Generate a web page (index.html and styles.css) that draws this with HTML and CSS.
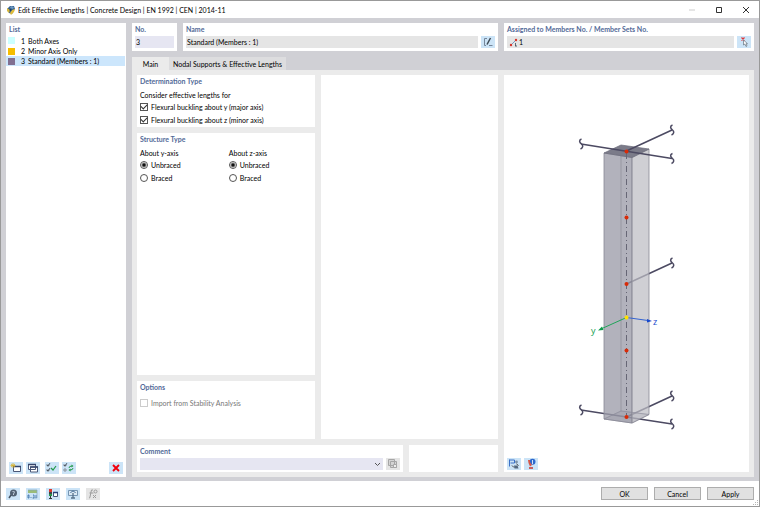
FILE: index.html
```html
<!DOCTYPE html>
<html lang="en">
<head>
<meta charset="utf-8">
<title>Edit Effective Lengths</title>
<link rel="stylesheet" href="styles.css">
</head>
<body>
<div class="window">
  <header class="titlebar">
    <svg class="app-icon" viewBox="0 0 10 10"><path d="M1 4 4 1l4 0 1 3-3 5-3-1z" fill="#35618f"/><path d="M1 3 4 5 3 8 1 6z" fill="#d8b83c"/><path d="M5 1l3 1-1 2-3-1z" fill="#6f9ac2"/><path d="M6 5l3-1-1 3-3 3-1-2z" fill="#e0bc3a"/><circle cx="4.500" cy="5" r="1" fill="#1e3c60"/></svg>
    <h1 class="title">Edit Effective Lengths | Concrete Design | EN 1992 | CEN | 2014-11</h1>
    <div class="window-controls">
      <button class="win-btn" aria-label="Minimize" disabled><svg viewBox="0 0 8 8"><path d="M1 4h6" stroke="#ccc"/></svg></button>
      <button class="win-btn" aria-label="Maximize"><svg viewBox="0 0 8 8"><path d="M1.500 1.500h5v5h-5z" fill="none" stroke="#333"/></svg></button>
      <button class="win-btn" aria-label="Close"><svg viewBox="0 0 8 8"><path d="M1 1l6 6M7 1l-6 6" stroke="#333"/></svg></button>
    </div>
  </header>

  <main class="workspace">
    <aside class="card list-card">
      <h2 class="heading">List</h2>
      <ul class="list">
        <li class="row"><span class="swatch cyan"></span><span class="num">1</span><span>Both Axes</span></li>
        <li class="row"><span class="swatch yellow"></span><span class="num">2</span><span>Minor Axis Only</span></li>
        <li class="row selected"><span class="swatch purple"></span><span class="num">3</span><span>Standard (Members : 1)</span></li>
      </ul>
      <div class="list-tools">
        <button class="tool" aria-label="New"><svg viewBox="0 0 14 12"><path d="M4.500 4.500h7v5h-7z" fill="#fff" stroke="#4b5878"/><path d="M4 4.500h8" stroke="#34456c" stroke-width="1.500"/><path d="M4 1v5M1.500 3.500h5M2 2l4 3M6 2 2 5" stroke="#d9b22c" stroke-width=".8"/></svg></button>
        <button class="tool" aria-label="Copy"><svg viewBox="0 0 14 12"><path d="M2.500 2.500h7v5h-7zM4.500 5h7v5h-7z" fill="#fff" stroke="#4b5878"/><path d="M2 2.500h8M4 5h8" stroke="#34456c" stroke-width="1.500"/></svg></button>
        <button class="tool spaced" aria-label="Select all"><svg viewBox="0 0 14 12" fill="none"><path d="M2 2v2h2V2M2 7v2h2V7" stroke="#8a929c"/><path d="M2 3l1 1 2-3M2 8l1 1 2-3" stroke="#3d4a55" stroke-width=".8"/><path d="M6 6l2 2 3-4" stroke="#23994b" stroke-width="1.200"/></svg></button>
        <button class="tool" aria-label="Invert selection"><svg viewBox="0 0 14 12" fill="none"><path d="M2 2v2h2V2M2 7h2v2H2z" stroke="#8a929c"/><path d="M2 3l1 1 2-3" stroke="#3d4a55" stroke-width=".8"/><path d="M7 6q0-2 3-2M11 6q0 2-3 2" stroke="#23994b"/><path d="M9.500 2.500l2 1.500-2 1.500zM8.500 6.500l-2 1.500 2 1.500z" fill="#23994b"/></svg></button>
        <button class="tool delete" aria-label="Delete"><svg viewBox="0 0 14 12"><path d="M4 3l6 6M10 3l-6 6" stroke="#f0000c" stroke-width="1.900"/></svg></button>
      </div>
    </aside>

    <section class="editor">
      <div class="fields">
        <div class="card field">
          <label class="heading" for="no">No.</label>
          <input class="input lilac" id="no" value="3">
        </div>
        <div class="card field">
          <label class="heading" for="name">Name</label>
          <div class="field-row">
            <input class="input" id="name" value="Standard (Members : 1)" readonly>
            <button class="tool" aria-label="Edit name"><svg viewBox="0 0 14 12" fill="none"><path d="M6 2.500H3.500v7H5M8 9.500h3.500" stroke="#75869a"/><path d="M6 8.500 9.500 2" stroke="#3d4a55" stroke-width="1.500"/></svg></button>
          </div>
        </div>
        <div class="card field">
          <label class="heading" for="members">Assigned to Members No. / Member Sets No.</label>
          <div class="field-row">
            <div class="input with-icon">
              <svg viewBox="0 0 10 9"><path d="M2 7 7 2" stroke="#7999bf"/><circle cx="2" cy="7" r="1.200" fill="#d5342c"/><circle cx="7" cy="2" r="1.200" fill="#d5342c"/><path d="M6.500 5v3M6 8h2" stroke="#3d4a55" stroke-width=".8"/></svg>
              <input id="members" value="1">
            </div>
            <button class="tool" aria-label="Select members"><svg viewBox="0 0 14 12"><path d="M4.500 1.500l3 3M7.500 1.500l-3 3" stroke="#df3538" stroke-width="1.200"/><path d="M6.500 4v5l1.300-1L9 10.500l1-.5-1-2.300h1.500z" fill="#fff" stroke="#65717d" stroke-width=".7"/></svg></button>
          </div>
        </div>
      </div>

      <div class="tabs" role="tablist">
        <button class="tab active" role="tab" aria-selected="true">Main</button>
        <button class="tab" role="tab" aria-selected="false">Nodal Supports &amp; Effective Lengths</button>
      </div>

      <div class="panel">
        <div class="column">
          <section class="card group">
            <h2 class="heading">Determination Type</h2>
            <p class="caption">Consider effective lengths for</p>
            <label class="option"><input type="checkbox" checked>Flexural buckling about y (major axis)</label>
            <label class="option"><input type="checkbox" checked>Flexural buckling about z (minor axis)</label>
          </section>
          <section class="card group grow">
            <h2 class="heading">Structure Type</h2>
            <div class="axes">
              <div>
                <p class="caption">About y-axis</p>
                <label class="option"><input type="radio" name="y" checked>Unbraced</label>
                <label class="option"><input type="radio" name="y">Braced</label>
              </div>
              <div>
                <p class="caption">About z-axis</p>
                <label class="option"><input type="radio" name="z" checked>Unbraced</label>
                <label class="option"><input type="radio" name="z">Braced</label>
              </div>
            </div>
          </section>
          <section class="card group options">
            <h2 class="heading">Options</h2>
            <label class="option disabled"><input type="checkbox" disabled>Import from Stability Analysis</label>
          </section>
        </div>
        <div class="card"></div>
        <div class="bottom">
          <div class="card comment">
            <label class="heading" for="comment">Comment</label>
            <div class="field-row">
              <div class="select-wrap">
                <select class="input lilac" id="comment"><option></option></select>
                <svg class="chevron" viewBox="0 0 7 5"><path d="M1 1l2.500 2.500L6 1" fill="none" stroke="#555"/></svg>
              </div>
              <button class="tool muted" aria-label="Copy comment" disabled><svg viewBox="0 0 14 12"><path d="M2.500 1.500h6v6h-6zM4.500 3.500h6v6h-6z" fill="#d4d4d4" stroke="#a6a6a6"/><path d="M7.500 6.500h3v3h-3z" fill="#eee" stroke="#a6a6a6"/></svg></button>
            </div>
          </div>
          <div class="card"></div>
        </div>
        <section class="card preview">
          <svg class="model" viewBox="504 75 245 383" role="img" aria-label="Column model">
            <defs>
              <path id="break" d="M.5-5C-2.500-4-1.500-1.500.5 0S2 4-.5 5" fill="none" stroke="#4c4a62" stroke-width="1.500"/>
            </defs>
            <path d="M604 419l17-8 28 3.500-17 8.500z" fill="#d5d5da" stroke="#a0a0aa" stroke-width=".7"/>
            <g stroke="#4c4a62" stroke-width="1.500">
              <path d="M581 410l91 14M626.500 417 672 396M626.500 284 672 263"/>
            </g>
            <path d="M604 153l28 4.500V423l-28-4z" fill="#9c9ca9" fill-opacity=".78" stroke="#888895" stroke-width=".8"/>
            <path d="M632 157.500l17-8.500v265.500L632 423z" fill="#bdbdc4" fill-opacity=".72" stroke="#888895" stroke-width=".8"/>
            <path d="M621 146v265" stroke="#8c8c9a" stroke-width=".7"/>
            <path d="M604 419l17-8 28 3.500" fill="none" stroke="#8c8c9a" stroke-width=".6"/>
            <path d="M604 153l17-8 28 4-17 8.500z" fill="#7b7b89" stroke="#6c6b7b" stroke-width=".7"/>
            <path d="M581 144l91 14.500M626.500 151 672 130" stroke="#4c4a62" stroke-width="1.500"/>
            <path d="M626.500 153v262" stroke="#666675" stroke-dasharray="6 3 1 3"/>
            <use href="#break" x="581" y="144"/><use href="#break" x="672" y="158.500"/><use href="#break" x="672" y="130"/>
            <use href="#break" x="672" y="263"/><use href="#break" x="581" y="410"/><use href="#break" x="672" y="424"/><use href="#break" x="672" y="396"/>
            <g fill="#d82b08"><circle cx="626.500" cy="151.500" r="2"/><circle cx="626.500" cy="217.500" r="2"/><circle cx="626.500" cy="284" r="2"/><circle cx="626.500" cy="350.500" r="2"/><circle cx="626.500" cy="417" r="2"/></g>
            <path d="M626.500 317.500 602 328.500" stroke="#20a45a"/><path d="M598 330.500l4-4 1.500 3.500z" fill="#109c4c"/>
            <path d="M626.500 317.500 648 320.500" stroke="#3463d0"/><path d="M652 321l-5-2v3.500z" fill="#1748cc"/>
            <circle cx="626.500" cy="317.500" r="2" fill="#ffe000"/>
            <text class="axis-y" x="591" y="334">y</text><text class="axis-z" x="653" y="325">z</text>
          </svg>
          <div class="preview-tools">
            <button class="tool" aria-label="View"><svg viewBox="0 0 14 12"><path d="M2.500 1.500v7M2.500 2h5v3h-4" fill="none" stroke="#3b71c7"/><circle cx="9.500" cy="4" r="1.400" fill="#7d93a9"/><path d="M7 7.500h3.500l1 3H7.500z" fill="#53687f"/><path d="M5 7.500l2 2M9.500 6l2 1.500" stroke="#444"/></svg></button>
            <button class="tool" aria-label="Information"><svg viewBox="0 0 14 12"><circle cx="8.500" cy="3.800" r="3" fill="#2d69ce"/><path d="M8.500 2v4" stroke="#fff" stroke-width=".8"/><path d="M4 2h2v2l2 3-2 1.500L4.500 5z" fill="#d4584a"/><path d="M5 10h4" stroke="#c9332b" stroke-width="1.500"/></svg></button>
          </div>
        </section>
      </div>
    </section>
  </main>

  <footer class="footer">
    <button class="tool" aria-label="Help"><svg viewBox="0 0 14 12"><circle cx="7.500" cy="5" r="3.500" fill="#536273"/><path d="M5 7 3 10" stroke="#435160" stroke-width="1.500"/><path d="M6.500 4q1-2 2 0L7.500 6v1" fill="none" stroke="#dce9f6" stroke-width=".8"/></svg></button>
    <button class="tool" aria-label="Units"><svg viewBox="0 0 14 12"><path d="M2 2h9v3H2z" fill="#9bbc78"/><path d="M2 2h9v8H6" fill="none" stroke="#83a8bc" stroke-width=".7"/><path d="M2 7h1v3H2zM5 9v1M7 7h1v3H7M10 7v3" fill="none" stroke="#396da5" stroke-width=".8"/></svg></button>
    <button class="tool" aria-label="Display"><svg viewBox="0 0 14 12"><path d="M3 1h3v3H3z" fill="#d9372e"/><path d="M3 4h3v2H3z" fill="#444"/><path d="M3 6h3v2H3z" fill="#269447"/><path d="M4.500 8v3M3 10.500h3" stroke="#333"/><path d="M7.500 4.500h4v4h-4z" fill="#fff" stroke="#435576"/><path d="M7 4.500h5" stroke="#233f79" stroke-width="1.500"/></svg></button>
    <button class="tool" aria-label="Graphics"><svg viewBox="0 0 14 12"><path d="M2.500 2.500h9v5h-9z" fill="#dbe9f5" stroke="#7695b2"/><path d="M7 5v5M5 10h4" stroke="#58718b" stroke-width="1.300"/><path d="M4.500 5q2.500-4 5 0" fill="none" stroke="#426b97"/></svg></button>
    <button class="tool muted" aria-label="Formula" disabled><svg viewBox="0 0 14 12" fill="none" stroke="#9b9b9b"><path d="M7 2Q5 1 5 4L4 9Q4 10 3 10M3.500 5h4M7 7l3 3M10 7l-3 3"/><circle cx="9.500" cy="3.500" r="1.500"/></svg></button>
    <div class="actions">
      <button class="action">OK</button>
      <button class="action">Cancel</button>
      <button class="action">Apply</button>
    </div>
    <svg class="grip" viewBox="0 0 6 6"><path d="M4 0h1v1H4zM2 2h1v1H2zM4 2h1v1H4zM0 4h1v1H0zM2 4h1v1H2zM4 4h1v1H4z" fill="#b5b5b5"/></svg>
  </footer>
</div>
</body>
</html>
```
FILE: styles.css
```css
* { box-sizing: border-box; }
body { margin: 0; font: 7px/10px Lato, "Open Sans", sans-serif; color: #000; }
button, input, select { font: inherit; color: inherit; border: 0; border-radius: 0; margin: 0; padding: 0; }
h1, h2, p, ul { margin: 0; padding: 0; }
svg { display: block; }
.window { display: flex; flex-direction: column; min-height: 100vh; border: 1px solid #999; background: #fff; }
.titlebar { display: flex; align-items: center; height: 17px; padding-left: 5px; }
.app-icon { width: 10px; height: 10px; margin-right: 2px; }
.title { font-size: 7px; font-weight: 400; }
.window-controls { display: flex; margin-left: auto; }
.win-btn { width: 27px; background: none; }
.win-btn svg { width: 8px; height: 8px; margin: auto; }
.workspace { flex: 1; display: grid; grid-template-columns: 120px 1fr; gap: 6px; padding: 5px 5px 4px; background: #d0d0d5; }
.card { background: #fff; min-width: 0; }
.heading { display: block; font-size: 7px; line-height: 10px; font-weight: 700; color: #536a98; }
.list-card { display: flex; flex-direction: column; }
.list-card > .heading { padding: 1px 3px 0; }
.list { list-style: none; flex: 1; padding-top: 1px; }
.row { display: flex; align-items: center; height: 11px; padding-left: 2px; margin-right: 1px; }
.row + .row { height: 10px; }
.row.selected { background: #cce6fc; }
.swatch { width: 7px; height: 7px; margin-right: 6px; }
.cyan { background: #ccffff; }
.yellow { background: #f6bd00; }
.purple { background: #806f91; }
.num { width: 7px; }
.list-tools { display: flex; gap: 3px; padding: 0 3px 3px; }
.spaced { margin-left: 2px; }
.tool { flex: none; width: 14px; height: 12px; background: #cce4f7; }
.tool svg { width: 14px; height: 12px; }
.muted { background: #e5e5e5; }
.delete { margin-left: auto; }
.editor { display: flex; flex-direction: column; min-width: 0; }
.fields { display: grid; grid-template-columns: 45px 1fr 250px; gap: 6px; }
.field { padding: 1px 3px 3px; height: 28px; }
.field .heading { margin-bottom: 2px; }
.field-row { display: flex; gap: 3px; }
.input { flex: 1; min-width: 0; width: 100%; height: 12px; padding-left: 1px; background: #e5e5e5; }
.lilac { background: #e6e6f2; }
.with-icon { display: flex; align-items: center; padding-left: 2px; }
.with-icon svg { width: 10px; height: 9px; }
.with-icon input { flex: 1; min-width: 0; background: none; }
.tabs { display: flex; height: 13px; margin-top: 6px; }
.tab { padding: 1px 4px 0; background: #dddddf; }
.tab.active { width: 37px; background: #ebebeb; }
.panel { flex: 1; display: grid; grid-template-columns: 1fr 1fr 245px; grid-template-rows: 1fr 27px; gap: 6px; padding: 5px; background: #ebebeb; }
.column { display: flex; flex-direction: column; gap: 6px; }
.group { padding: 1px 3px 0; }
.grow { flex: 1; }
.options { height: 58px; }
.caption { margin-top: 5px; line-height: 9px; }
.option { display: flex; align-items: center; gap: 3px; height: 13px; }
.group > .option:last-child { margin-bottom: 1px; }
.options .option { margin-top: 4px; }
.disabled { color: #777; }
.option input { appearance: none; width: 8px; height: 8px; border: 1px solid #555; background: #fff; }
.option input[type="radio"] { border-radius: 50%; }
.option input[type="radio"]:checked { background: radial-gradient(circle, #111 0 1px, #fff 3px); }
.option input[type="checkbox"]:checked::before { content: ""; display: block; width: 5px; height: 3px; border: solid #333; border-width: 0 0 1px 1px; transform: rotate(-45deg); }
.option input:disabled { border-color: #ccc; }
.axes { display: grid; grid-template-columns: 1fr 1fr; gap: 6px; }
.bottom { grid-column: 1 / 3; grid-row: 2; display: grid; grid-template-columns: 1fr 89px; gap: 6px; }
.comment { padding: 1px 3px 0; }
.comment .heading { margin-bottom: 2px; }
.select-wrap { position: relative; flex: 1; display: flex; }
.select-wrap select { appearance: none; }
.chevron { position: absolute; right: 2px; top: 4px; width: 7px; height: 5px; pointer-events: none; }
.preview { grid-column: 3; grid-row: 1 / 3; display: flex; flex-direction: column; }
.model { width: 100%; flex: 1; min-height: 0; }
.axis-y { font: 9px "Open Sans", sans-serif; fill: #109c4c; }
.axis-z { font: 9px "Open Sans", sans-serif; fill: #1748cc; }
.preview-tools { display: flex; gap: 3px; padding: 0 3px 2px; }
.footer { position: relative; display: flex; align-items: center; gap: 6px; height: 25px; padding: 0 5px; }
.actions { display: flex; gap: 6px; margin-left: auto; }
.action { width: 47px; height: 13px; background: #e1e1e1; border: 1px solid #adadad; }
.grip { position: absolute; right: 0; bottom: 0; width: 6px; height: 6px; }
```
